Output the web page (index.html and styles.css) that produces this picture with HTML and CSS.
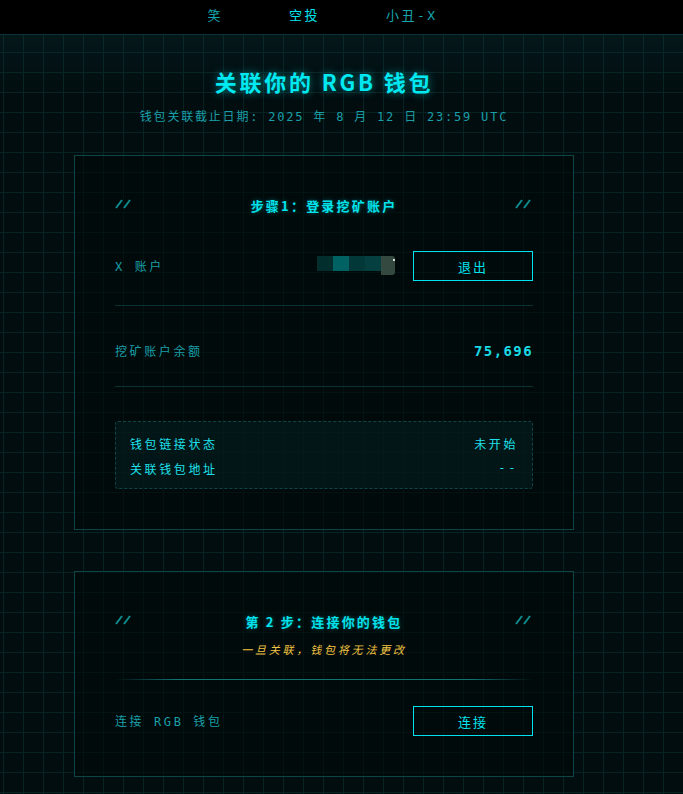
FILE: index.html
```html
<!DOCTYPE html>
<html lang="zh-CN">
<head>
<meta charset="utf-8">
<title>关联你的 RGB 钱包</title>
<link rel="stylesheet" href="styles.css">
</head>
<body>
<header class="topbar">
  <nav class="nav">
    <a class="nav-item">笑</a>
    <a class="nav-item active">空投</a>
    <a class="nav-item">小丑-X</a>
  </nav>
</header>
<main class="main">
  <h1 class="title">关联你的 RGB 钱包</h1>
  <p class="deadline">钱包关联截止日期: 2025 年 8 月 12 日 23:59 UTC</p>

  <section class="card">
    <div class="card-head">
      <svg class="slashes" width="18" height="10" viewBox="0 0 18 10"><path d="M1 9 L7 1 M9 9 L15 1" stroke="#0e8c8e" stroke-width="2" fill="none"/></svg>
      <h2 class="card-title">步骤1：登录挖矿账户</h2>
      <svg class="slashes" width="18" height="10" viewBox="0 0 18 10"><path d="M1 9 L7 1 M9 9 L15 1" stroke="#0e8c8e" stroke-width="2" fill="none"/></svg>
    </div>
    <div class="row row-account">
      <span class="label">X 账户</span>
      <div class="row-right">
        <div class="blur-name"><i class="b1"></i><i class="b2"></i><i class="b3"></i><i class="b4"></i><i class="b5"></i><i class="b6"></i></div>
        <button class="btn">退出</button>
      </div>
    </div>
    <hr class="divider">
    <div class="row row-balance">
      <span class="label">挖矿账户余额</span>
      <span class="balance">75,696</span>
    </div>
    <hr class="divider divider-2">
    <div class="status">
      <div class="status-row"><span>钱包链接状态</span><span>未开始</span></div>
      <div class="status-row"><span>关联钱包地址</span><span>--</span></div>
    </div>
  </section>

  <section class="card card-2">
    <div class="card-head">
      <svg class="slashes" width="18" height="10" viewBox="0 0 18 10"><path d="M1 9 L7 1 M9 9 L15 1" stroke="#0e8c8e" stroke-width="2" fill="none"/></svg>
      <h2 class="card-title">第 2 步：连接你的钱包</h2>
      <svg class="slashes" width="18" height="10" viewBox="0 0 18 10"><path d="M1 9 L7 1 M9 9 L15 1" stroke="#0e8c8e" stroke-width="2" fill="none"/></svg>
    </div>
    <p class="warning">一旦关联，钱包将无法更改</p>
    <hr class="divider divider-glow">
    <div class="row row-connect">
      <span class="label">连接 RGB 钱包</span>
      <button class="btn">连接</button>
    </div>
  </section>
</main>
</body>
</html>
```
FILE: styles.css
```css
html, body {
  margin: 0;
  padding: 0;
  overflow: hidden;
}
body {
  height: 794px;
  background-color: #020d0f;
  background-image:
    linear-gradient(to bottom, transparent 35px, rgba(12, 60, 62, 0.22) 35px, transparent 95px),
    linear-gradient(#082324 1px, transparent 1px),
    linear-gradient(90deg, #082324 1px, transparent 1px);
  background-size: 100% 100%, 20px 20px, 20px 20px;
  background-position: 0 0, 3px 12px, 3px 12px;
  background-repeat: no-repeat, repeat, repeat;
  font-family: "DejaVu Sans Mono", "Noto Sans CJK SC", monospace;
  color: #1aa0a8;
}
.topbar {
  height: 34px;
  background: #000;
  border-bottom: 1px solid #0b3536;
  display: flex;
  justify-content: center;
  padding-right: 38px;
}
.nav {
  display: flex;
  align-items: center;
  gap: 66px;
}
.nav-item {
  font-size: 13px;
  letter-spacing: 2.5px;
  color: #17a6ac;
  text-decoration: none;
  line-height: 28px;
  padding-bottom: 2px;
}
.nav-item.active {
  color: #00e6ee;
}
.main {
  width: 500px;
  margin: 0 0 0 74px;
}
.title {
  margin: 31px 0 0;
  text-align: center;
  font-family: "Noto Sans CJK SC", sans-serif;
  font-weight: 700;
  font-size: 22px;
  line-height: 30px;
  letter-spacing: 2.8px;
  color: #00e8f0;
  text-shadow: 0 0 8px rgba(0, 230, 240, 0.55);
}
.deadline {
  margin: 12px 0 0;
  text-align: center;
  font-size: 12px;
  line-height: 18px;
  letter-spacing: 1.8px;
  color: #1a9fa7;
}
.card {
  margin-top: 29px;
  border: 1px solid #0d4546;
  background: rgba(0, 8, 9, 0.6);
  padding: 39px 40px 40px;
}
.card-2 {
  margin-top: 41px;
}
.card-head {
  display: flex;
  align-items: center;
  justify-content: space-between;
  height: 20px;
}
.slashes {
  display: block;
  margin-top: -3px;
}
.card-title {
  margin: 0;
  font-family: "Noto Sans CJK SC", sans-serif;
  font-weight: 700;
  font-size: 13px;
  letter-spacing: 2.2px;
  color: #00e3ec;
  text-shadow: 0 0 4px rgba(0, 220, 230, 0.4);
}
.row {
  display: flex;
  align-items: center;
  justify-content: space-between;
  height: 30px;
}
.row-account { margin-top: 36px; }
.row-balance { margin-top: 30px; }
.row-connect { margin-top: 26px; }
.label {
  font-size: 12px;
  letter-spacing: 2.6px;
  color: #1a9fa7;
  margin-top: -2px;
}
.row-right {
  display: flex;
  align-items: center;
  gap: 18px;
}
.blur-name {
  display: flex;
  align-items: flex-start;
  height: 20px;
}
.blur-name i {
  display: block;
  width: 16px;
  height: 15px;
}
.blur-name .b1 { background: #032e2e; }
.blur-name .b2 { background: #006262; }
.blur-name .b3 { background: #033838; }
.blur-name .b4 { background: #053f3f; }
.blur-name .b5 { background: #344a40; height: 19px; width: 14px; border-radius: 0 3px 3px 0; }
.blur-name .b6 { width: 2px; height: 2px; background: #d8e0d8; margin-top: 3px; margin-left: -2px; }
.btn {
  width: 120px;
  height: 30px;
  box-sizing: border-box;
  background: transparent;
  border: 1px solid #00e3ee;
  color: #00e3ee;
  font-family: "Noto Sans CJK SC", sans-serif;
  font-size: 13px;
  letter-spacing: 2px;
  padding: 0;
  cursor: pointer;
}
.divider {
  border: 0;
  height: 1px;
  background: #0c3334;
  margin: 24px 0 0;
}
.divider-2 { margin-top: 20px; }
.balance {
  font-weight: 700;
  font-size: 14px;
  letter-spacing: 1.4px;
  color: #19d9e4;
}
.status {
  margin-top: 34px;
  border: 1px dashed #0f4445;
  border-radius: 3px;
  background: rgba(4, 36, 38, 0.45);
  padding: 11px 14px 10px;
}
.status-row {
  display: flex;
  justify-content: space-between;
  align-items: center;
  height: 20px;
  font-size: 12px;
  letter-spacing: 2.6px;
  color: #1fe0ea;
}
.status-row + .status-row { margin-top: 5px; }
.warning {
  margin: 10px 0 0;
  text-align: center;
  font-family: "Noto Sans CJK SC", sans-serif;
  font-style: italic;
  font-size: 11px;
  line-height: 16px;
  letter-spacing: 2.8px;
  color: #f2c443;
}
.divider-glow {
  margin-top: 22px;
  background: linear-gradient(90deg, transparent, #137476 15%, #137476 85%, transparent);
}
```
